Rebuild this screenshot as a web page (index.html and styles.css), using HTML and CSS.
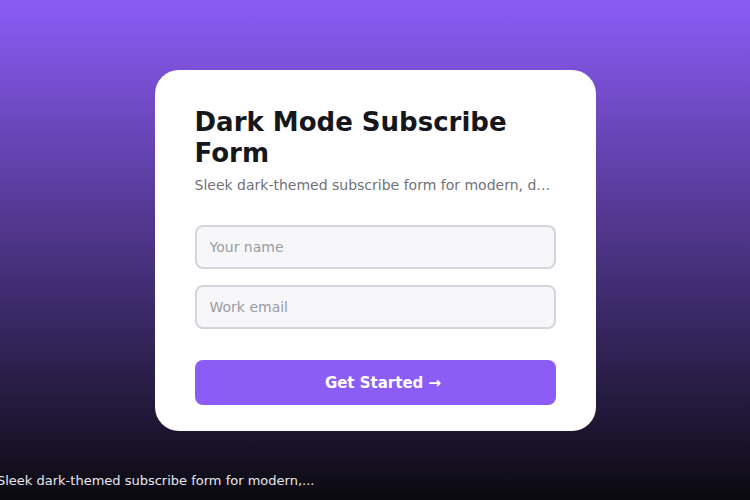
FILE: index.html
```html
<!DOCTYPE html>
<html lang="en">
<head>
    <meta charset="UTF-8">
    <meta name="viewport" content="width=device-width, initial-scale=1.0">
    <title>Dark Mode Subscribe Form</title>
    <link rel="stylesheet" href="styles.css">
</head>
<body>
    <div class="card">
        <h1 class="title">Dark Mode Subscribe Form</h1>
        <p class="subtitle">Sleek dark-themed subscribe form for modern, dark-first products.</p>
        <form class="form" onsubmit="return false">
            <input class="field" type="text" placeholder="Your name">
            <input class="field" type="email" placeholder="Work email">
            <button class="submit" type="submit">Get Started →</button>
        </form>
    </div>
    <div class="caption">Sleek dark-themed subscribe form for modern,...</div>
</body>
</html>
```

FILE: styles.css
```css
html, body {
    height: 100%;
}
body {
    margin: 0;
    font-family: "DejaVu Sans", sans-serif;
    background: linear-gradient(to bottom, #8b5cf6 0%, #0b0a10 100%);
    display: flex;
    justify-content: center;
    align-items: flex-start;
    overflow: hidden;
}
.card {
    box-sizing: border-box;
    width: 441px;
    margin-top: 70px;
    padding: 37px 40px 26px;
    background: #fff;
    border-radius: 24px;
}
.title {
    margin: 0;
    font-size: 26px;
    line-height: 31px;
    font-weight: bold;
    color: #16161d;
}
.subtitle {
    margin: 6px 0 0;
    font-size: 14px;
    line-height: 20px;
    color: #71717a;
    white-space: nowrap;
    overflow: hidden;
    text-overflow: ellipsis;
}
.form {
    display: flex;
    flex-direction: column;
    margin-top: 30px;
}
.field {
    box-sizing: border-box;
    height: 44px;
    margin-bottom: 16px;
    padding: 0 13px;
    font-family: inherit;
    font-size: 14px;
    color: #16161d;
    background: #f7f7f9;
    border: 2px solid #d4d4dc;
    border-radius: 8px;
    outline: none;
}
.field::placeholder {
    color: #9a9aa4;
}
.submit {
    height: 45px;
    margin-top: 15px;
    padding: 0 0 0 16px;
    font-family: inherit;
    font-size: 15px;
    font-weight: bold;
    color: #fff;
    background: #8b5cf6;
    border: none;
    border-radius: 8px;
    cursor: pointer;
}
.caption {
    position: absolute;
    left: -3px;
    bottom: 12px;
    font-size: 13px;
    color: #e8e8ee;
}
```
